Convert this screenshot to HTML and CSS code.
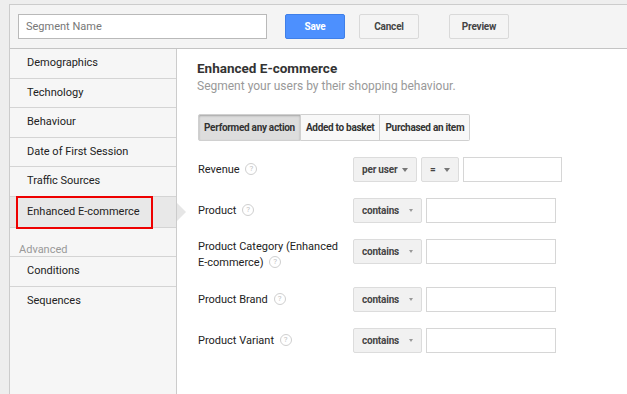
FILE: index.html
```html
<!DOCTYPE html>
<html lang="en">
<head>
    <meta charset="UTF-8">
    <title>Segment Editor</title>
    <link rel="stylesheet" href="styles.css">
</head>
<body>

<div class="page">
    <div class="topbar">
        <input class="name-input" type="text" placeholder="Segment Name">
        <button class="btn btn-save">Save</button>
        <button class="btn btn-cancel">Cancel</button>
        <button class="btn btn-preview">Preview</button>
    </div>

    <div class="main">
        <ul class="sidebar">
            <li class="nav-item">Demographics</li>
            <li class="nav-item">Technology</li>
            <li class="nav-item">Behaviour</li>
            <li class="nav-item">Date of First Session</li>
            <li class="nav-item">Traffic Sources</li>
            <li class="nav-item selected">Enhanced E-commerce</li>
            <li class="nav-label">Advanced</li>
            <li class="nav-item">Conditions</li>
            <li class="nav-item last">Sequences</li>
        </ul>

        <div class="content">
            <h2 class="title">Enhanced E-commerce</h2>
            <p class="subtitle">Segment your users by their shopping behaviour.</p>

            <div class="tabs">
                <button class="tab active">Performed any action</button>
                <button class="tab">Added to basket</button>
                <button class="tab">Purchased an item</button>
            </div>

            <div class="row">
                <div class="label"><span>Revenue <span class="help">?</span></span></div>
                <div class="select select-user">per user <span class="caret"></span></div>
                <div class="select select-eq">= <span class="caret"></span></div>
                <input class="value value-short" type="text">
            </div>

            <div class="row">
                <div class="label"><span>Product <span class="help">?</span></span></div>
                <div class="select">contains <span class="caret small"></span></div>
                <input class="value" type="text">
            </div>

            <div class="row">
                <div class="label"><span>Product Category (Enhanced E-commerce) <span class="help">?</span></span></div>
                <div class="select">contains <span class="caret small"></span></div>
                <input class="value" type="text">
            </div>

            <div class="row">
                <div class="label"><span>Product Brand <span class="help">?</span></span></div>
                <div class="select">contains <span class="caret small"></span></div>
                <input class="value" type="text">
            </div>

            <div class="row">
                <div class="label"><span>Product Variant <span class="help">?</span></span></div>
                <div class="select">contains <span class="caret small"></span></div>
                <input class="value" type="text">
            </div>
        </div>
    </div>
</div>

</body>
</html>
```

FILE: styles.css
```css
body {
    margin: 0;
    background-color: #eeeeee;
    font-family: Roboto, "Liberation Sans", Arial, sans-serif;
    color: #222;
    overflow: hidden;
}

.page {
    margin: 4px 0 0 9px;
    height: 390px;
    border-top: 1px solid #cccccc;
    border-left: 1px solid #cccccc;
    display: flex;
    flex-direction: column;
}

/* top bar */
.topbar {
    display: flex;
    align-items: center;
    height: 43px;
    padding: 0 8px;
    background-color: #f4f4f4;
    border-bottom: 1px solid #c4c4c4;
}

.name-input {
    box-sizing: border-box;
    width: 249px;
    height: 25px;
    margin: 0;
    padding: 0 7px;
    border: 1px solid #b9b9b9;
    font-family: Roboto, sans-serif;
    font-size: 11px;
    color: #333;
}

.name-input::placeholder {
    color: #777;
}

.btn {
    box-sizing: border-box;
    width: 60px;
    height: 25px;
    border: 1px solid #d9d9d9;
    border-radius: 2px;
    background-color: #f4f4f4;
    color: #444;
    font-family: Roboto, Arial, sans-serif;
    font-weight: bold;
    font-size: 10px;
    letter-spacing: -0.2px;
    cursor: pointer;
}

.btn-save {
    margin-left: 18px;
    background-color: #4d90fe;
    border-color: #3f7fe8;
    color: #fff;
}

.btn-cancel {
    margin-left: 14px;
}

.btn-preview {
    margin-left: 30px;
}

/* body */
.main {
    display: flex;
    flex: 1;
}

.sidebar {
    list-style: none;
    margin: 0;
    padding: 0;
    width: 166px;
    background-color: #f6f6f6;
    border-right: 1px solid #cccccc;
    font-size: 11px;
}

.nav-item {
    position: relative;
    height: 28.6px;
    line-height: 28px;
    padding-left: 17px;
    border-bottom: 1px solid #d4d4d4;
}

.nav-item.selected {
    height: 30px;
    line-height: 30px;
    background-color: #e8e8e8;
}

/* red annotation box */
.nav-item.selected::before {
    content: "";
    position: absolute;
    left: 6px;
    top: -1px;
    width: 133px;
    height: 29px;
    border: 2px solid #ee0000;
}

/* pointer into the content panel */
.nav-item.selected::after {
    content: "";
    position: absolute;
    right: -10px;
    top: 6px;
    width: 0;
    height: 0;
    border-top: 9px solid transparent;
    border-bottom: 9px solid transparent;
    border-left: 9px solid #e6e6e6;
}

.nav-label {
    padding: 15px 0 0 9px;
    height: 13px;
    line-height: 13px;
    color: #999;
    border-bottom: 1px solid #d4d4d4;
}

.nav-item.last {
    border-bottom: none;
}

.content {
    flex: 1;
    background-color: #fff;
    padding: 10px 20px;
}

.title {
    margin: 0;
    font-size: 13.5px;
    line-height: 18px;
    font-weight: bold;
    color: #333;
}

.subtitle {
    margin: 1px 0 0;
    font-size: 12px;
    line-height: 16px;
    color: #999;
}

.tabs {
    display: flex;
    margin: 20px 0 16px 1px;
}

.tab {
    height: 27px;
    margin: 0;
    padding: 0 5px;
    border: 1px solid #d0d0d0;
    border-left: none;
    background-color: #f8f8f8;
    color: #333;
    font-family: Roboto, Arial, sans-serif;
    font-weight: bold;
    font-size: 10px;
    letter-spacing: -0.3px;
}

.tab:first-child {
    border-left: 1px solid #d0d0d0;
    border-radius: 2px 0 0 2px;
}

.tab:last-child {
    border-radius: 0 2px 2px 0;
}

.tab.active {
    background-color: #dddddd;
    box-shadow: inset 0 1px 2px rgba(0, 0, 0, 0.25);
}

.row {
    display: flex;
    align-items: flex-start;
    margin-bottom: 16px;
    margin-left: 1px;
}

.label {
    display: flex;
    align-items: center;
    width: 150px;
    min-height: 25px;
    margin-right: 5px;
    font-size: 11px;
    line-height: 16px;
    color: #222;
}

.help {
    display: inline-block;
    box-sizing: border-box;
    width: 12px;
    height: 12px;
    margin-left: 3px;
    vertical-align: middle;
    margin-top: -2px;
    border: 1px solid #cfcfcf;
    border-radius: 50%;
    color: #c2c2c2;
    font-size: 8px;
    line-height: 10px;
    text-align: center;
}

.select {
    box-sizing: border-box;
    display: flex;
    align-items: center;
    justify-content: space-between;
    width: 69px;
    height: 25px;
    margin-right: 4px;
    padding: 0 8px;
    background-color: #f1f1f1;
    border: 1px solid #dcdcdc;
    border-radius: 2px;
    color: #444;
    font-family: Roboto, Arial, sans-serif;
    font-weight: bold;
    font-size: 10px;
    letter-spacing: -0.2px;
    white-space: nowrap;
}

.select-user {
    width: 64px;
}

.select-eq {
    width: 38px;
}

.caret {
    width: 0;
    height: 0;
    border-left: 3.5px solid transparent;
    border-right: 3.5px solid transparent;
    border-top: 4px solid #777;
}

.caret.small {
    border-left-width: 2.5px;
    border-right-width: 2.5px;
    border-top-width: 3px;
    border-top-color: #999;
}

.value {
    box-sizing: border-box;
    width: 130px;
    height: 25px;
    margin: 0;
    border: 1px solid #d6d6d6;
    background-color: #fff;
}

.value-short {
    width: 99px;
}
```
